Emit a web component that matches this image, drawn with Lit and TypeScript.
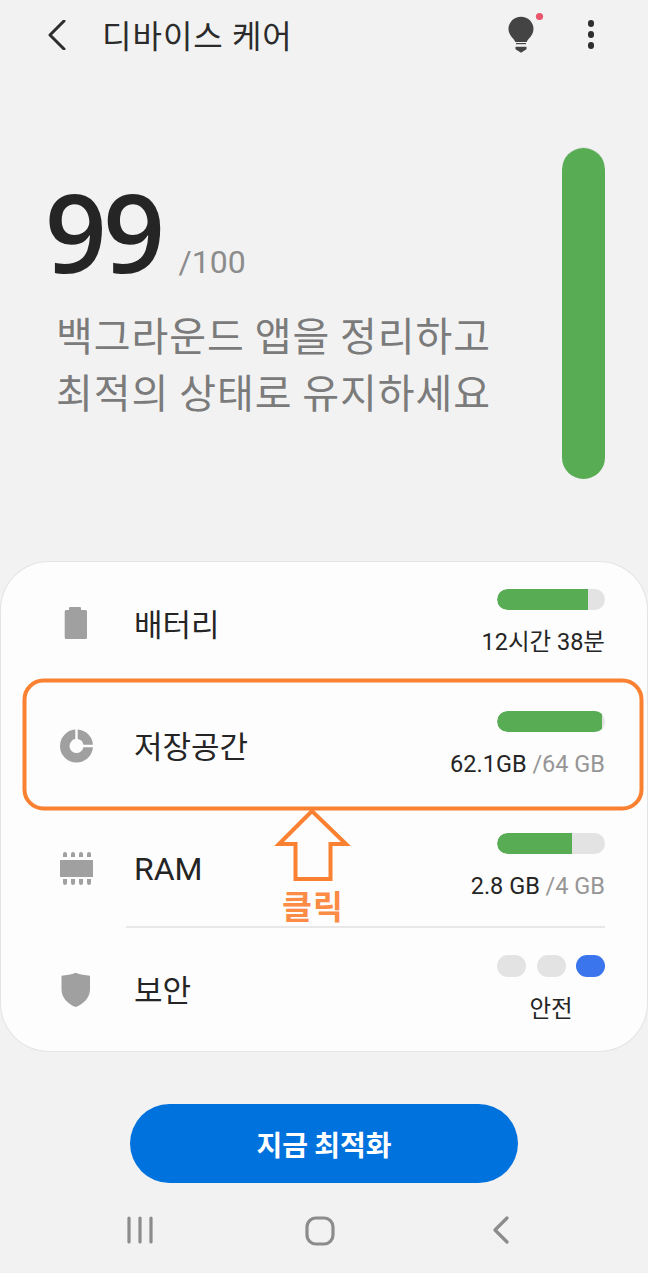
import { LitElement, html, css } from "lit";
import { customElement } from "lit/decorators.js";

interface Row {
  name: string;
  icon: unknown;
  value: string;
  total?: string;
  fill?: number;
}

const batteryIcon = html`<svg viewBox="0 0 36 36" width="36" height="36"><path fill="#a0a0a0" d="M13 2h10a1 1 0 0 1 1 1v2h4.500A1.500 1.500 0 0 1 30 6.500v26a1.500 1.500 0 0 1-1.500 1.500H9.200a1.500 1.500 0 0 1-1.500-1.500v-26A1.500 1.500 0 0 1 9.200 5H12V3a1 1 0 0 1 1-1Z"/></svg>`;
const pieIcon = html`<svg viewBox="0 0 36 37" width="36" height="37"><path fill="#a0a0a0" d="M18.300 2.540A16.500 16.500 0 1 0 35.960 20.200H26.400A7 7 0 1 1 18.300 12.100Z"/><path fill="#a0a0a0" d="M20.700 2.540A16.500 16.500 0 0 1 35.960 17.800H26.400A7 7 0 0 0 20.700 12.100Z"/></svg>`;
const ramIcon = html`<svg viewBox="0 0 36 36" width="36" height="36"><g fill="#a0a0a0"><rect x="3" y="11" width="33" height="17"/>
<path d="M6 5a2 2 0 0 1 4 0v3H6ZM14 5a2 2 0 0 1 4 0v3h-4ZM22 5a2 2 0 0 1 4 0v3h-4ZM30 5a2 2 0 0 1 4 0v3h-4Z"/>
<path d="M6 30h4v4a2 2 0 0 1-4 0ZM14 30h4v4a2 2 0 0 1-4 0ZM22 30h4v4a2 2 0 0 1-4 0ZM30 30h4v4a2 2 0 0 1-4 0Z"/></g></svg>`;
const shieldIcon = html`<svg viewBox="0 0 36 37" width="36" height="37"><path fill="#a0a0a0" d="M18.700 1.700C23.200 3.500 28 4.300 33 4.700v13.500c0 8.200-5.800 14.400-14.300 17.800C10.200 32.600 4.500 26.400 4.500 18.200V4.700C9.500 4.300 14.200 3.500 18.700 1.700Z"/></svg>`;

const rows: Row[] = [
  { name: "배터리", icon: batteryIcon, value: "12시간 38분", fill: 84.5 },
  { name: "저장공간", icon: pieIcon, value: "62.1GB", total: " /64 GB", fill: 97 },
  { name: "RAM", icon: ramIcon, value: "2.8 GB", total: " /4 GB", fill: 69.5 },
  { name: "보안", icon: shieldIcon, value: "안전" },
];

@customElement("app-root")
export class AppRoot extends LitElement {
  static styles = css`
    :host {
      display: block;
      position: relative;
      width: 648px;
      height: 1273px;
      overflow: hidden;
      background: #f2f2f2;
      font-family: "Noto Sans CJK KR", Roboto, sans-serif;
      color: #252525;
    }
    .page { display: flex; flex-direction: column; height: 1273px; }
    .header {
      height: 70px;
      display: flex;
      align-items: center;
      padding: 0 54px 0 46px;
      flex: none;
    }
    .back { display: block; width: 22px; height: 30px; margin-right: 34px; margin-top: -1px; }
    .title { flex: 1; font-size: 32px; line-height: 70px; letter-spacing: 1px; color: #2b2b2b; margin-top: -3px; }
    .bulb { display: block; width: 40px; height: 44px; margin-right: 43px; margin-top: -2px; }
    .dots { display: flex; flex-direction: column; gap: 4.500px; margin-top: -1px; }
    .dots i { display: block; width: 6.500px; height: 6.500px; border-radius: 50%; background: #2e2e2e; }
    .hero {
      height: 492px;
      flex: none;
      display: flex;
      justify-content: space-between;
      padding: 77px 43px 0 47px;
      box-sizing: border-box;
    }
    .left { padding-top: 17px; }
    .score { display: flex; align-items: baseline; height: 136px; }
    .num { font-family: "Open Sans", sans-serif; font-weight: 600; font-size: 108px; line-height: 136px; letter-spacing: -3.500px; color: #252525; margin-left: -2px; }
    .max { font-family: Roboto, sans-serif; font-size: 32px; color: #8c8c8c; margin-left: 17px; }
    .msg { margin: 6px 0 0 9px; font-size: 40px; line-height: 57px; color: #7b7b7b; letter-spacing: 0.95px; white-space: nowrap; }
    .big-track { width: 43px; height: 332px; border-radius: 22px; background: #e3e3e3; overflow: hidden; display: flex; flex-direction: column; justify-content: flex-end; }
    .big-fill { height: 331px; background: #58ad54; border-radius: 22px 22px 0 0; }
    .card {
      flex: none;
      margin: 0 1px;
      height: 489px;
      background: #fdfdfd;
      border-radius: 48px;
      box-shadow: 0 0 0 1px #e4e4e4;
    }
    .row { height: 122px; display: flex; align-items: center; box-sizing: border-box; position: relative; padding: 0 42px 0 56px; }
    .icon { width: 36px; height: 36px; flex: none; display: block; }
    .name { flex: 1; margin-left: 41px; font-size: 31px; line-height: 40px; color: #252525; }
    .name.latin { font-family: Roboto, sans-serif; font-size: 32px; position: relative; top: 2px; }
    .rule { position: absolute; left: 125px; right: 42px; bottom: 0; height: 2px; background: #e8e8e8; }
    .stat { width: 160px; display: flex; flex-direction: column; align-items: flex-end; }
    .track { width: 108px; height: 21px; border-radius: 11px; background: #e3e3e3; overflow: hidden; }
    .fill { height: 100%; background: #58ad54; border-radius: 11px 0 0 11px; }
    .val { margin-top: 17px; font-size: 23.500px; line-height: 30px; color: #252525; white-space: nowrap; font-family: Roboto, "Noto Sans CJK KR", sans-serif; }
    .val span { color: #969696; }
    .lights { display: flex; gap: 10.500px; }
    .lights i { display: block; width: 29px; height: 22px; border-radius: 11px; background: #e3e3e3; }
    .lights i.on { background: #3b75ee; }
    .center-val { width: 108px; text-align: center; }
    .cta {
      flex: none;
      display: block;
      margin: 53px 0 0 130px;
      width: 388px;
      height: 79px;
      border: 0;
      border-radius: 40px;
      background: #0072de;
      color: #fff;
      font-family: inherit;
      font-weight: 600;
      font-size: 28px;
    }
    .nav { flex: none; height: 90px; display: flex; align-items: flex-start; padding: 33px 138px 0 127px; justify-content: space-between; }
    .nav svg { display: block; }
    .home { position: relative; left: -2.500px; }
    .mark { position: absolute; left: 0; top: 0; pointer-events: none; }
    .click { position: absolute; left: 282px; top: 883px; font-size: 32.500px; line-height: 44px; font-weight: 700; color: #fb8b45; letter-spacing: 1px; }
  `;

  private renderRow(r: Row, i: number) {
    return html`<div class="row">
      <span class="icon">${r.icon}</span>
      <div class="name ${r.name === "RAM" ? "latin" : ""}">${r.name}</div>
      <div class="stat">
        ${r.fill !== undefined
          ? html`<div class="track"><div class="fill" style="width:${r.fill}%"></div></div>`
          : html`<div class="lights"><i></i><i></i><i class="on"></i></div>`}
        <div class="val ${r.fill === undefined ? "center-val" : ""}">${r.value}${r.total ? html`<span>${r.total}</span>` : ""}</div>
      </div>
      ${i === 2 ? html`<div class="rule"></div>` : ""}
    </div>`;
  }

  render() {
    return html`<div class="page">
        <div class="header">
          <svg class="back" viewBox="0 0 22 30"><path d="M18 2 4 16l14 14" transform="translate(0 -1)" fill="none" stroke="#2d2d2d" stroke-width="3" stroke-linecap="round" stroke-linejoin="round"/></svg>
          <div class="title">디바이스 케어</div>
          <svg class="bulb" viewBox="0 0 40 44"><circle cx="34.500" cy="4.500" r="3.600" fill="#e8566c"/><path fill="#444" d="M16 4.700c7 0 12.500 5.400 12.500 12.300 0 4.300-2.500 7.400-4.500 9.500-1.300 1.400-2 2.700-2.200 3.500H10.200c-.2-.8-.9-2.100-2.200-3.500C6 24.400 3.500 21.300 3.500 17 3.500 10.100 9 4.700 16 4.700Z"/><rect x="11" y="31" width="10" height="1.200" fill="#444"/><path fill="#444" d="M10.500 34.700h11v2.500L16 40.700l-5.500-3.500Z"/></svg>
          <div class="dots"><i></i><i></i><i></i></div>
        </div>
        <div class="hero">
          <div class="left">
            <div class="score"><span class="num">99</span><span class="max">/100</span></div>
            <div class="msg">백그라운드 앱을 정리하고<br />최적의 상태로 유지하세요</div>
          </div>
          <div class="big-track"><div class="big-fill"></div></div>
        </div>
        <div class="card">${rows.map((r, i) => this.renderRow(r, i))}</div>
        <button class="cta">지금 최적화</button>
        <div class="nav">
          <svg width="26" height="28" viewBox="0 0 26 28"><path d="M2 2v24M13 2v24M24 2v24" stroke="#8c8c8c" stroke-width="3.200" stroke-linecap="round" fill="none"/></svg>
          <svg class="home" width="30" height="30" viewBox="0 0 30 30"><rect x="2" y="2" width="26" height="26" rx="9" fill="none" stroke="#8c8c8c" stroke-width="3.200"/></svg>
          <svg width="18" height="28" viewBox="0 0 18 28"><path d="M15 2 3 14l12 12" fill="none" stroke="#8c8c8c" stroke-width="3.200" stroke-linecap="round" stroke-linejoin="round"/></svg>
        </div>
      </div>
      <svg class="mark" width="648" height="1273" viewBox="0 0 648 1273">
        <rect x="24.500" y="680.500" width="617" height="128" rx="19" fill="none" stroke="#f98131" stroke-width="4"/>
        <path d="M312 811 279 844h16.500v35h35v-35H346Z" fill="#fdfdfd" stroke="#f98131" stroke-width="4" stroke-linejoin="miter"/>
      </svg>
      <div class="click">클릭</div>`;
  }
}
